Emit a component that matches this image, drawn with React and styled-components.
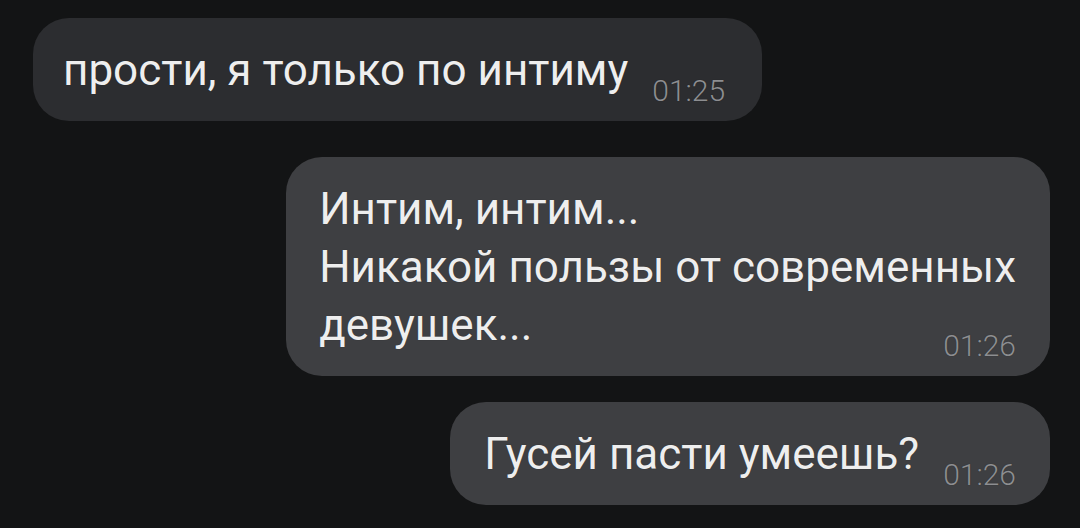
import React from "react";
import styled, { createGlobalStyle } from "styled-components";

const Global = createGlobalStyle`
  html, body {
    margin: 0;
    padding: 0;
    background: #131415;
  }
  body {
    font-family: Roboto, "Noto Sans", "Liberation Sans", sans-serif;
  }
`;

const Chat = styled.div`
  width: 1080px;
  height: 528px;
  box-sizing: border-box;
  padding: 18px 30px 0 33px;
  display: flex;
  flex-direction: column;
  background: #131415;
  overflow: hidden;
`;

const Row = styled.div`
  display: flex;
  justify-content: ${(p) => (p.$out ? "flex-end" : "flex-start")};
  margin-top: ${(p) => p.$mt || 0}px;
`;

const Bubble = styled.div`
  display: flow-root;
  box-sizing: border-box;
  padding: 23px ${(p) => p.$pr || 34}px 22px ${(p) => p.$pl || 31}px;
  border-radius: 36px;
  background: ${(p) => (p.$out ? "#3e3f42" : "#2c2d30")};
  color: #eeeeee;
  font-size: 44px;
  line-height: 58px;
  font-weight: 400;
  text-shadow: 0 0 1px rgba(0, 0, 0, 0.35);
`;

const Time = styled.span`
  float: right;
  position: relative;
  top: 35px;
  margin-left: 24px;
  font-size: 30px;
  line-height: 30px;
  font-weight: 300;
  color: #8d8e91;
`;

export default function App() {
  return (
    <>
      <Global />
      <Chat>
        <Row>
          <Bubble $pl={30} $pr={37}>
            прости, я только по интиму
            <Time>01:25</Time>
          </Bubble>
        </Row>
        <Row $out $mt={36}>
          <Bubble $out $pl={33}>
            Интим, интим...
            <br />
            Никакой пользы от современных
            <br />
            девушек...
            <Time>01:26</Time>
          </Bubble>
        </Row>
        <Row $out $mt={26}>
          <Bubble $out $pl={34}>
            Гусей пасти умеешь?
            <Time>01:26</Time>
          </Bubble>
        </Row>
      </Chat>
    </>
  );
}
